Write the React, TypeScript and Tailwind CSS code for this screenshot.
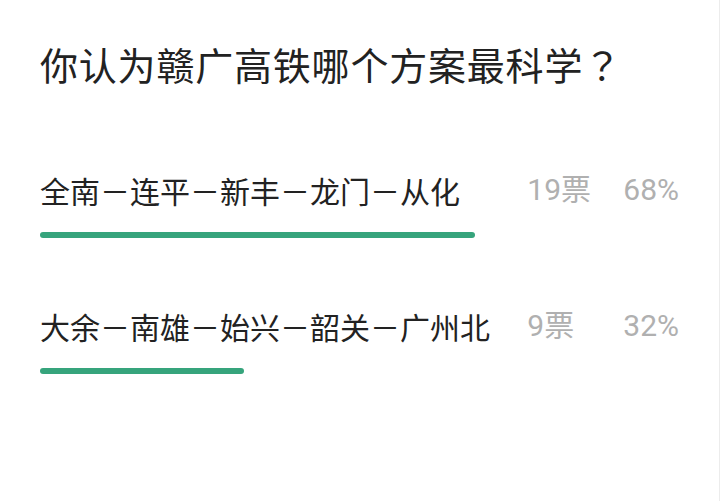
import React from 'react';

interface Option {
  id: number;
  label: string;
  votes: number;
  percent: number;
}

const options: Option[] = [
  { id: 1, label: '全南－连平－新丰－龙门－从化', votes: 19, percent: 68 },
  { id: 2, label: '大余－南雄－始兴－韶关－广州北', votes: 9, percent: 32 },
];

const App: React.FC = () => {
  return (
    <div className="w-[720px] h-[501px] bg-white border-r border-[#ececec] overflow-hidden">
      <div className="px-[40px] pt-[40px]">
        <h1 className="text-[38px] leading-[48px] tracking-[0.8px] font-normal text-[#222] font-['Noto_Sans_CJK_SC',sans-serif] whitespace-nowrap">
          你认为赣广高铁哪个方案最科学
          <span className="font-['Noto_Sans_CJK_TC',sans-serif]">？</span>
        </h1>

        <div className="mt-[82px] flex flex-col">
          {options.map((option) => (
            <div key={option.id} className="h-[136px]">
              <div className="flex items-center h-[40px] text-[30px] leading-[40px]">
                <span className="flex-1 text-[#222] font-['Noto_Sans_CJK_SC',sans-serif] whitespace-nowrap">
                  {option.label}
                </span>
                <span className="w-[96px] text-[#b0b0b0] font-['Roboto','Noto_Sans_CJK_SC',sans-serif]">
                  {option.votes}票
                </span>
                <span className="text-[#b0b0b0] font-['Roboto',sans-serif]">
                  {option.percent}%
                </span>
              </div>
              <div className="mt-[22px] w-full h-[6px]">
                <div
                  className="h-full rounded-full bg-[#36a47c]"
                  style={{ width: `${option.percent}%` }}
                />
              </div>
            </div>
          ))}
        </div>
      </div>
    </div>
  );
};

export default App;
